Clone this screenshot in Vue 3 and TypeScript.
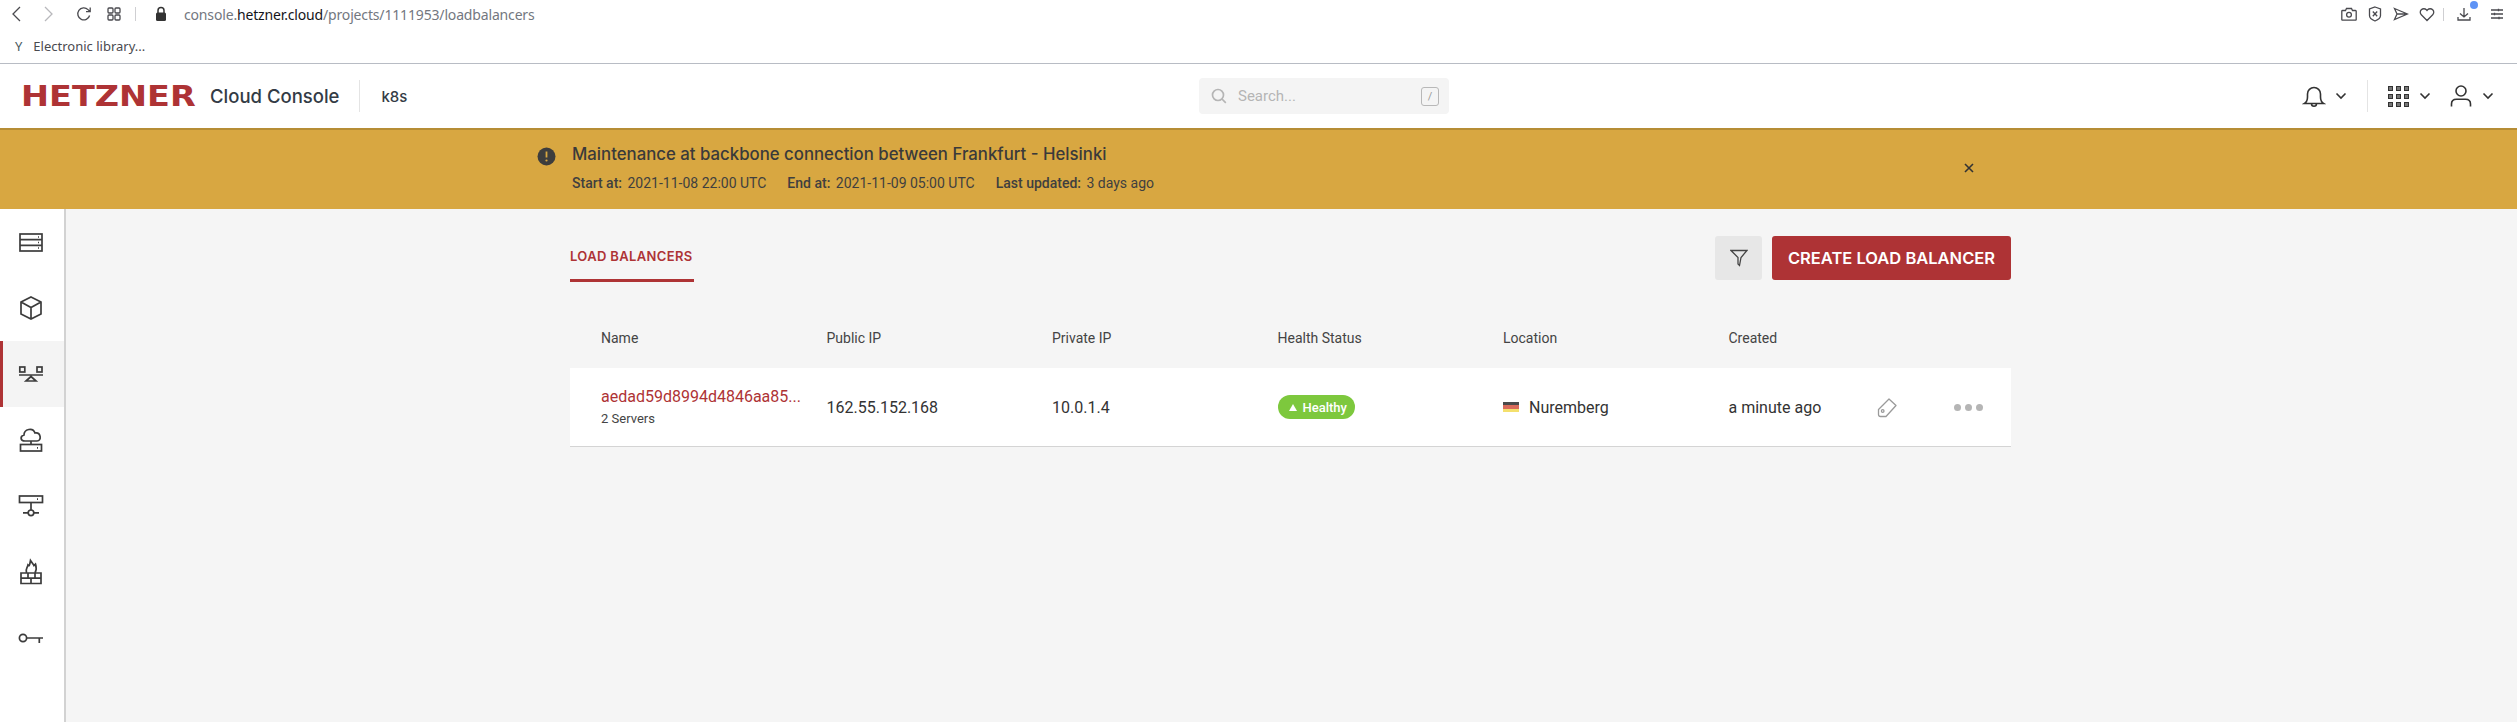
<script setup lang="ts">
const navItems = [
  { id: 'servers', active: false },
  { id: 'volumes', active: false },
  { id: 'balancers', active: true },
  { id: 'ips', active: false },
  { id: 'networks', active: false },
  { id: 'firewalls', active: false },
  { id: 'keys', active: false },
]

const columns = ['Name', 'Public IP', 'Private IP', 'Health Status', 'Location', 'Created']
</script>

<template>
  <div class="page">
    <div class="browser">
      <div class="browser-top">
        <svg class="b-ic back" width="12" height="18" viewBox="0 0 12 18"><path d="M10 2 3 9l7 7" /></svg>
        <svg class="b-ic fwd" width="12" height="18" viewBox="0 0 12 18"><path d="M2 2l7 7-7 7" /></svg>
        <svg class="b-ic reload" width="16" height="16" viewBox="0 0 16 16"><path d="M13.6 9.5A6 6 0 1 1 12 3.6L14 5.6M14.2 1.5v4.2H10" /></svg>
        <svg class="b-ic tabs" width="14" height="14" viewBox="0 0 14 14"><rect x="1" y="1" width="5" height="5" rx="1" /><rect x="8" y="1" width="5" height="5" rx="1" /><rect x="1" y="8" width="5" height="5" rx="1" /><rect x="8" y="8" width="5" height="5" rx="1" /></svg>
        <span class="b-sep"></span>
        <svg class="lock" width="12" height="16" viewBox="0 0 12 16"><path d="M3 7V4.500a3 3 0 0 1 6 0V7" fill="none" stroke="#333" stroke-width="1.500" /><rect x="1" y="6.500" width="10" height="8.500" rx="1.500" fill="#333" /></svg>
        <div class="url">console.<b>hetzner.cloud</b>/projects/1111953/loadbalancers</div>
        <div class="b-right">
          <svg class="b-ic" width="16" height="16" viewBox="0 0 16 16"><path d="M1.500 4.500h3l1-2h5l1 2h3a.7.7 0 0 1 .7.7v8.300a.7.7 0 0 1-.7.7h-13a.7.7 0 0 1-.7-.7V5.200a.7.7 0 0 1 .7-.7z" /><circle cx="8" cy="8.800" r="2.400" /></svg>
          <svg class="b-ic ext" width="14" height="16" viewBox="0 0 14 16"><path d="M7 1l5.500 2v6.500c0 2.500-3 4.500-5.500 5.500-2.500-1-5.500-3-5.500-5.500V3z" /><path d="M4.800 5.500l4.400 4.700M9.200 5.500l-4.400 4.700" /></svg>
          <svg class="b-ic ext" width="16" height="14" viewBox="0 0 16 14"><path d="M1.500 1.500 14.500 7l-13 5.500L4 7zM4 7h10.500" /></svg>
          <svg class="b-ic" width="16" height="15" viewBox="0 0 16 15"><path d="M8 13.500 2.300 7.800a3.500 3.500 0 0 1 0-5 3.600 3.600 0 0 1 5.100 0l.6.700.6-.7a3.600 3.600 0 0 1 5.100 0 3.500 3.500 0 0 1 0 5z" /></svg>
          <span class="b-sep end"></span>
          <div class="dl">
            <svg class="b-ic" width="14" height="16" viewBox="0 0 14 16"><path d="M7 2v9M3 7.500 7 11l4-3.500M1 11v3h12v-3" /></svg>
            <span class="dot"></span>
          </div>
          <svg class="b-ic menu" width="14" height="12" viewBox="0 0 14 12"><path d="M1 2h12M1 6h12M1 10h12M8.500.8v2.400M4.500 4.800v2.400M9 8.800v2.400" /></svg>
        </div>
      </div>
      <div class="bookmarks">
        <span class="bm-ic">Y</span>
        <span>Electronic library...</span>
      </div>
    </div>

    <header class="nav">
      <div class="nav-left">
        <div class="logo"><span>HETZNER</span></div>
        <div class="brand">Cloud Console</div>
        <span class="nav-sep"></span>
        <div class="project">k8s</div>
      </div>
      <div class="search">
        <svg width="16" height="16" viewBox="0 0 16 16" fill="none" stroke="#b5b5b5" stroke-width="1.700"><circle cx="7" cy="7" r="5.500" /><path d="m11 11 3.800 3.800" /></svg>
        <span class="search-text">Search...</span>
        <span class="kbd">/</span>
      </div>
      <div class="nav-right">
        <svg class="n-ic" width="24" height="24" viewBox="0 0 24 24"><path d="M2.500 19.500c2.500-1.500 3-3.500 3-6.500V10a6.500 6.500 0 0 1 13 0v3c0 3 .5 5 3 6.500zM9.500 19.800c0 3.200 5 3.200 5 0" /></svg>
        <svg class="chev c1" width="12" height="8" viewBox="0 0 12 8"><path d="M1.500 1.500 6 6l4.500-4.500" /></svg>
        <span class="nav-sep right"></span>
        <div class="apps"><i v-for="n in 9" :key="n"></i></div>
        <svg class="chev c2" width="12" height="8" viewBox="0 0 12 8"><path d="M1.500 1.500 6 6l4.500-4.500" /></svg>
        <svg class="n-ic user" width="22" height="24" viewBox="0 0 22 24"><circle cx="11" cy="7" r="5" /><path d="M1.500 22.500V20c0-3 2-4.700 5-4.700h9c3 0 5 1.700 5 4.700v2.500" /></svg>
        <svg class="chev c3" width="12" height="8" viewBox="0 0 12 8"><path d="M1.500 1.500 6 6l4.500-4.500" /></svg>
      </div>
    </header>

    <div class="banner">
      <svg class="warn" width="19" height="19" viewBox="0 0 19 19"><circle cx="9.500" cy="9.500" r="9" fill="#3d3d3d" /><path d="M9.500 4.500v6" stroke="#d8a741" stroke-width="1.800" /><circle cx="9.500" cy="13.500" r="1.100" fill="#d8a741" /></svg>
      <div class="banner-body">
        <div class="banner-title">Maintenance at backbone connection between Frankfurt - Helsinki</div>
        <div class="banner-meta">
          <span><b>Start at:</b> 2021-11-08 22:00 UTC</span>
          <span><b>End at:</b> 2021-11-09 05:00 UTC</span>
          <span><b>Last updated:</b> 3 days ago</span>
        </div>
      </div>
      <svg class="close" width="12" height="12" viewBox="0 0 12 12"><path d="M2 2l8 8M10 2l-8 8" stroke="#333" stroke-width="1.600" /></svg>
    </div>

    <div class="main">
      <aside class="sidebar">
        <div v-for="item in navItems" :key="item.id" :class="['side-item', { active: item.active }]">
          <svg width="32" height="32" viewBox="0 0 32 32" class="side-ic">
            <template v-if="item.id === 'servers'">
              <rect x="5" y="8" width="22" height="17" />
              <path d="M5 13.700h22M5 19.400h22M23 11h1M23 16.500h1M23 22h1" />
            </template>
            <template v-else-if="item.id === 'volumes'">
              <path d="M16 5 26 10v12l-10 5-10-5V10zM6 10l10 5.500L26 10M16 15.500V27" />
            </template>
            <template v-else-if="item.id === 'balancers'">
              <rect x="4.800" y="9" width="5" height="5" />
              <rect x="22" y="9" width="5" height="5" />
              <path d="M4 17h24M16 18.500l5 4.500H11z" />
            </template>
            <template v-else-if="item.id === 'ips'">
              <path d="M16 17v3M10 17c-5 0-5-5-1-6 0-6 9-8 11-2 6-1 7 8 2 8z" />
              <rect x="5.500" y="20.500" width="21" height="6.500" />
              <path d="M22 23.800h1" />
            </template>
            <template v-else-if="item.id === 'networks'">
              <rect x="4.500" y="6" width="23" height="6.500" />
              <path d="M22 9.200h1M16 12.500V20M8 22.800h5M19 22.800h5" />
              <circle cx="16" cy="22.800" r="2.800" />
            </template>
            <template v-else-if="item.id === 'firewalls'">
              <path d="M6 17h20v10.500H6zM6 22.200h20M13 17v5.200M20 17v5.200M16 22.200v5.300" />
              <path d="M11.500 17c-1.500-4 1-5 1.500-8 1 1 1.500 1.500 2.500-4.500 2 3 3 4 3.500 5 .5-.5 1-1 1.500-1.500 1 3 1 6-.500 9" />
            </template>
            <template v-else>
              <circle cx="8" cy="16" r="3.600" />
              <path d="M11.600 16H28M24.300 16v5" />
            </template>
          </svg>
        </div>
      </aside>

      <main class="content">
        <div class="toolbar">
          <div class="tab">LOAD BALANCERS</div>
          <div class="toolbar-actions">
            <button class="filter">
              <svg width="18" height="18" viewBox="0 0 18 18" fill="none" stroke="#444" stroke-width="1.300"><path d="M1 1.500h16L11 8.500l-1.500 8L8 15V8.500z" /></svg>
            </button>
            <button class="create">CREATE LOAD BALANCER</button>
          </div>
        </div>

        <div class="table-head">
          <div v-for="col in columns" :key="col">{{ col }}</div>
        </div>

        <div class="row">
          <div class="name-cell">
            <div class="name">aedad59d8994d4846aa85...</div>
            <div class="sub">2 Servers</div>
          </div>
          <div>162.55.152.168</div>
          <div>10.0.1.4</div>
          <div>
            <span class="badge"><i class="tri"></i>Healthy</span>
          </div>
          <div class="loc">
            <span class="flag"><i class="f1"></i><i class="f2"></i><i class="f3"></i></span>
            Nuremberg
          </div>
          <div>a minute ago</div>
          <div class="tag-cell">
            <svg width="22" height="22" viewBox="0 0 22 22" fill="none" stroke="#9a9a9a" stroke-width="1.300" stroke-linejoin="round"><path d="M13 3 20 9.500 10 20.500H4.500Q2.500 20.500 2.500 18.500V13.500z" /><circle cx="6.700" cy="15" r="1.300" /></svg>
          </div>
          <div class="dots"><i></i><i></i><i></i></div>
        </div>
      </main>
    </div>
  </div>
</template>

<style>
html,
body {
  margin: 0;
  background: #f5f5f5;
}
</style>

<style scoped>
.page {
  width: 2517px;
  height: 722px;
  overflow: hidden;
  display: flex;
  flex-direction: column;
  font-family: Roboto, sans-serif;
  color: #333;
}

.browser {
  height: 63px;
  background: #fff;
  border-bottom: 1px solid #b8bcc4;
  font-family: "Noto Sans", sans-serif;
}

.browser-top {
  height: 28px;
  display: flex;
  align-items: center;
}

.b-ic {
  fill: none;
  stroke: #4a4a4f;
  stroke-width: 1.300;
  flex: none;
}

.back {
  margin-left: 10px;
}

.fwd {
  margin-left: 21px;
  stroke: #b8b8bc;
}

.reload {
  margin-left: 21px;
}

.tabs {
  margin-left: 15px;
}

.b-sep {
  width: 1px;
  height: 14px;
  background: #cfcfd2;
  margin-left: 14px;
}

.lock {
  margin-left: 19px;
}

.url {
  margin-left: 17px;
  font-size: 14px;
  color: #737780;
  letter-spacing: -0.16px;
}

.url b {
  font-weight: 400;
  color: #15141a;
}

.b-right {
  margin-left: auto;
  display: flex;
  align-items: center;
  gap: 10px;
  padding-right: 13px;
}

.ext {
  margin-left: 1px;
}

.b-sep.end {
  margin-left: -2px;
  height: 13px;
}

.dl {
  position: relative;
  display: flex;
  margin-left: 3px;
  margin-right: 9px;
}

.dot {
  position: absolute;
  top: -5px;
  right: -7px;
  width: 8px;
  height: 8px;
  border-radius: 50%;
  background: #5e93f5;
}

.bookmarks {
  height: 35px;
  display: flex;
  align-items: center;
  padding-left: 15px;
  font-size: 13px;
  color: #4a4a4f;
  gap: 11px;
  box-sizing: border-box;
}

.bm-ic {
  font-size: 13px;
  color: #4a5a60;
}

.nav {
  height: 64px;
  background: #fff;
  display: flex;
  align-items: center;
  padding-left: 22px;
  padding-right: 23px;
}

.nav-left {
  width: 1177px;
  flex: none;
  display: flex;
  align-items: center;
}

.logo {
  width: 172px;
  font-family: "DejaVu Sans", sans-serif;
  font-weight: 700;
  font-size: 29px;
  line-height: 1;
  color: #ae3335;
  white-space: nowrap;
}

.logo span {
  display: inline-block;
  transform: scaleX(1.155);
  transform-origin: left center;
  margin-left: -1px;
}

.brand {
  margin-left: 16px;
  font-family: Inter, sans-serif;
  font-weight: 500;
  font-size: 18.500px;
  color: #333b45;
}

.nav-sep {
  width: 1px;
  height: 32px;
  background: #e4e4e4;
  margin-left: 20px;
}

.project {
  margin-left: 21px;
  font-family: Inter, sans-serif;
  font-size: 15px;
  font-weight: 500;
  color: #333b45;
}

.search {
  width: 250px;
  height: 36px;
  flex: none;
  background: #f4f4f4;
  border-radius: 4px;
  display: flex;
  align-items: center;
  padding: 0 10px 0 12px;
  box-sizing: border-box;
}

.search-text {
  margin-left: 11px;
  font-size: 15px;
  color: #b5b5b5;
}

.kbd {
  margin-left: auto;
  width: 16px;
  height: 17px;
  border: 1px solid #b8b8b8;
  border-radius: 3px;
  font-size: 11px;
  color: #999;
  display: flex;
  align-items: center;
  justify-content: center;
}

.nav-right {
  margin-left: auto;
  display: flex;
  align-items: center;
}

.n-ic {
  fill: none;
  stroke: #333;
  stroke-width: 1.600;
}

.chev {
  fill: none;
  stroke: #333;
  stroke-width: 1.600;
}

.c1 {
  margin-left: 9px;
}

.nav-sep.right {
  margin-left: 20px;
}

.apps {
  margin-left: 20px;
  display: grid;
  grid-template-columns: repeat(3, 5px);
  gap: 3px;
}

.apps i {
  width: 5px;
  height: 5px;
  border: 1px solid #333;
  box-sizing: border-box;
  background: #777;
}

.c2 {
  margin-left: 10px;
}

.user {
  margin-left: 19px;
}

.c3 {
  margin-left: 10px;
}

.banner {
  height: 81px;
  box-sizing: border-box;
  background: #d8a741;
  border-top: 2px solid #b68d35;
  display: flex;
  align-items: flex-start;
  padding-left: 537px;
  padding-right: 542px;
}

.warn {
  margin-top: 17px;
  flex: none;
}

.banner-body {
  margin-left: 16px;
  padding-top: 14px;
}

.banner-title {
  font-family: Inter, sans-serif;
  font-weight: 500;
  font-size: 16.800px;
  line-height: 20px;
  color: #3a3a3a;
  white-space: nowrap;
}

.banner-meta {
  margin-top: 9px;
  display: flex;
  gap: 21px;
  font-size: 14px;
  line-height: 20px;
  color: #3f3f3f;
  white-space: nowrap;
}

.banner-meta b {
  font-weight: 500;
  margin-right: 2px;
}

.close {
  margin-left: auto;
  margin-top: 32px;
  flex: none;
}

.main {
  flex: 1;
  display: flex;
  min-height: 0;
  padding-right: 2px;
}

.sidebar {
  width: 64px;
  flex: none;
  background: #fff;
  border-right: 2px solid #d2d2d2;
}

.side-item {
  height: 66px;
  display: flex;
  align-items: center;
  justify-content: center;
  padding-right: 2px;
  box-sizing: border-box;
}

.side-item.active {
  background: #f4f4f4;
  box-shadow: inset 3px 0 0 #ae3335;
}

.side-ic {
  fill: none;
  stroke: #3c3c3c;
  stroke-width: 1.700;
}

.content {
  width: 1441px;
  margin: 0 auto;
}

.toolbar {
  display: flex;
  justify-content: space-between;
  padding-top: 27px;
}

.tab {
  height: 46px;
  box-sizing: border-box;
  border-bottom: 3px solid #ae3335;
  display: flex;
  align-items: center;
  padding-bottom: 3px;
  width: 124px;
  font-family: Inter, sans-serif;
  font-weight: 600;
  font-size: 13px;
  letter-spacing: 0.35px;
  color: #ae3335;
  white-space: nowrap;
}

.toolbar-actions {
  display: flex;
  gap: 10px;
  height: 44px;
}

.filter {
  width: 47px;
  height: 44px;
  border: 0;
  border-radius: 3px;
  background: #e7e7e7;
  padding: 0;
  display: flex;
  align-items: center;
  justify-content: center;
}

.create {
  width: 239px;
  height: 44px;
  border: 0;
  border-radius: 3px;
  background: #ae3335;
  color: #fff;
  font-family: Inter, sans-serif;
  font-weight: 600;
  font-size: 16.500px;
  padding: 0;
  white-space: nowrap;
}

.table-head,
.row {
  display: grid;
  grid-template-columns: repeat(5, 225.5px) 145px 80px 1fr;
  padding-left: 31px;
  align-items: center;
}

.table-head {
  height: 86px;
  padding-top: 25px;
  box-sizing: border-box;
  font-size: 14px;
  color: #444;
}

.row {
  height: 79px;
  box-sizing: border-box;
  background: #fff;
  border-bottom: 1px solid #d4d4d4;
  font-size: 16px;
  color: #333;
}

.name {
  color: #ae3335;
  font-size: 16px;
  line-height: 20px;
  white-space: nowrap;
}

.sub {
  font-size: 13px;
  line-height: 17px;
  margin-top: 3px;
  color: #444;
}

.badge {
  width: 77px;
  height: 24px;
  border-radius: 12px;
  background: #7dc83d;
  color: #fff;
  font-size: 13px;
  font-weight: 500;
  display: inline-flex;
  align-items: center;
  padding-left: 11px;
  box-sizing: border-box;
  vertical-align: middle;
}

.tri {
  width: 0;
  height: 0;
  border-left: 4px solid transparent;
  border-right: 4px solid transparent;
  border-bottom: 7px solid #fff;
  margin-right: 6px;
}

.loc {
  display: flex;
  align-items: center;
}

.flag {
  width: 16px;
  height: 10px;
  margin-right: 10px;
  display: flex;
  flex-direction: column;
}

.flag i {
  flex: 1;
}

.f1 {
  background: #4a4a4a;
}

.f2 {
  background: #d96a5a;
}

.f3 {
  background: #f4e06d;
}

.tag-cell {
  padding-left: 2px;
  display: flex;
}

.dots {
  display: flex;
  gap: 4px;
}

.dots i {
  width: 7px;
  height: 7px;
  border-radius: 50%;
  background: #b5b5b5;
}
</style>
